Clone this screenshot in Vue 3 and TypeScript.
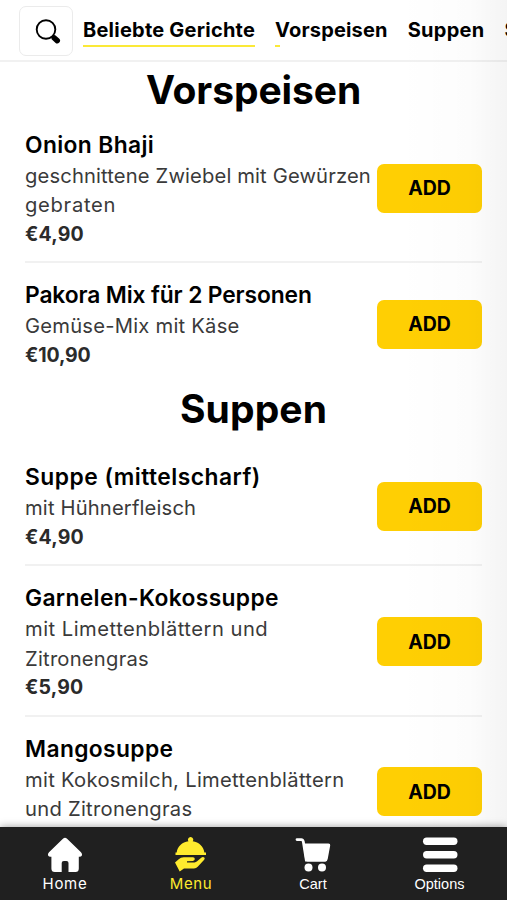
<script setup lang="ts">
interface Line { text: string; track: number }
interface Dish { name: Line; description: Line[]; price: Line }
interface Section { title: Line; dishes: Dish[] }

const line = (text: string, track: number): Line => ({ text, track })
const spacing = (l: Line) => ({ letterSpacing: `${l.track}px` })

const categories: (Line & { progress: string })[] = [
  { text: 'Beliebte Gerichte', track: 0.23, progress: '100%' },
  { text: 'Vorspeisen', track: 0.18, progress: '5px' },
  { text: 'Suppen', track: 0.26, progress: '0' },
  { text: 'Salate', track: 0.2, progress: '0' },
]

const sections: Section[] = [
  {
    title: line('Vorspeisen', -0.09),
    dishes: [
      {
        name: line('Onion Bhaji', 0.38),
        description: [line('geschnittene Zwiebel mit Gewürzen', 0.14), line('gebraten', 0.7)],
        price: line('€4,90', 0.17),
      },
      {
        name: line('Pakora Mix für 2 Personen', -0.12),
        description: [line('Gemüse-Mix mit Käse', 0.23)],
        price: line('€10,90', -0.15),
      },
    ],
  },
  {
    title: line('Suppen', 0.1),
    dishes: [
      {
        name: line('Suppe (mittelscharf)', 0.49),
        description: [line('mit Hühnerfleisch', 0.16)],
        price: line('€4,90', 0.17),
      },
      {
        name: line('Garnelen-Kokossuppe', 0.35),
        description: [line('mit Limettenblättern und', 0.49), line('Zitronengras', 0.23)],
        price: line('€5,90', 0.18),
      },
      {
        name: line('Mangosuppe', 0.38),
        description: [line('mit Kokosmilch, Limettenblättern', 0.29), line('und Zitronengras', 0.27)],
        price: line('€5,90', 0.18),
      },
    ],
  },
]
</script>

<template>
  <div class="screen">
    <header class="topbar">
      <button class="search" aria-label="Suche">
        <svg width="28" height="28" viewBox="0 0 28 28">
          <circle cx="12" cy="11.5" r="9.3" fill="none" stroke="#000" stroke-width="1.9" />
          <path d="M18.3 18 20 19.7" stroke="#000" stroke-width="2" />
          <path d="M20.3 20 23.2 22.6" stroke="#000" stroke-width="5.6" stroke-linecap="round" />
        </svg>
      </button>
      <nav class="categories">
        <a v-for="c in categories" :key="c.text" class="category">
          <span :style="spacing(c)">{{ c.text }}</span>
          <i class="progress" :style="{ width: c.progress }"></i>
        </a>
      </nav>
    </header>

    <main class="content">
      <section v-for="s in sections" :key="s.title.text" class="section">
        <h2 class="heading" :style="spacing(s.title)">{{ s.title.text }}</h2>
        <article v-for="d in s.dishes" :key="d.name.text" class="dish">
          <div class="info">
            <h3 class="name" :style="spacing(d.name)">{{ d.name.text }}</h3>
            <p v-for="l in d.description" :key="l.text" class="desc" :style="spacing(l)">{{ l.text }}</p>
            <p class="price" :style="spacing(d.price)">{{ d.price.text }}</p>
          </div>
          <button class="add">ADD</button>
        </article>
      </section>
    </main>

    <div class="edge-fade"></div>

    <footer class="tabbar">
      <a class="tab">
        <svg width="36" height="36" viewBox="0 0 36 36" fill="currentColor">
          <path d="M16.2 1.5Q18 0 19.8 1.5L34 15.2Q35.6 16.9 34.9 18.5 34.3 19.8 32.4 19.8H31.8V31.5Q31.8 35 28.5 35H21.5V26Q21.5 24 19.5 24H16.8Q14.7 24 14.7 26V35H7.8Q4.4 35 4.4 31.5V19.8H3.6Q1.7 19.8 1.1 18.5.4 16.9 2 15.2Z" />
        </svg>
        <span class="label home">Home</span>
      </a>
      <a class="tab active">
        <svg width="36" height="36" viewBox="0 0 36 36" fill="currentColor">
          <path d="M3.700 15.400C4.500 9.500 9 5.200 15.500 4.300A2.600 2.600 0 1 1 19.700 4.300C26 5.200 30.500 9.500 31.400 15.400H33V18H2.500V15.400Z" />
          <path d="M2 25.500 5.700 22.300Q7.700 20.200 10.800 20.200H20Q21.800 20.200 21.800 22 21.800 23.600 19.900 23.900L14 24.300V25.400H21.500Q23 25.400 24.100 24.300L28.200 20.700Q29.900 19.500 31.300 20.500 32.200 21.500 31.200 22.800L24.700 29.700Q23.200 31.400 21 31.400H11L6.700 34.500Z" />
        </svg>
        <span class="label menu">Menu</span>
      </a>
      <a class="tab">
        <svg width="36" height="36" viewBox="0 0 36 36" fill="currentColor">
          <path d="M2 2.600H6.300Q7.800 2.600 8.300 4.500L11.300 23H30.500" fill="none" stroke="currentColor" stroke-width="2.800" stroke-linecap="round" />
          <path d="M8 6.500H33.500Q35.500 6.500 35.200 8.500L32.700 22Q32.300 24.500 30 24.500H12.500Q10.500 24.500 10.200 22.500Z" />
          <circle cx="13.500" cy="30.500" r="4" />
          <circle cx="27" cy="30.500" r="4" />
        </svg>
        <span class="label plain">Cart</span>
      </a>
      <a class="tab">
        <svg width="36" height="36" viewBox="0 0 36 36" fill="currentColor">
          <rect x="1" y="0.500" width="34.500" height="7.500" rx="3.700" />
          <rect x="1" y="14" width="34.500" height="7.500" rx="3.700" />
          <rect x="1" y="27.500" width="34.500" height="7.500" rx="3.700" />
        </svg>
        <span class="label plain">Options</span>
      </a>
    </footer>
  </div>
</template>

<style>
body {
  margin: 0;
  background: #fff;
}
</style>

<style scoped>
.screen {
  position: relative;
  display: flex;
  flex-direction: column;
  width: 100%;
  height: 900px;
  overflow: hidden;
  font-family: Inter, 'Open Sans', sans-serif;
  color: #000;
}
h2, h3, p {
  margin: 0;
}
.topbar {
  flex: none;
  display: flex;
  align-items: flex-start;
  gap: 10px;
  box-sizing: border-box;
  height: 62px;
  padding: 6px 0 0 19px;
  border-bottom: 2px solid #f1f1f1;
}
.search {
  flex: none;
  display: grid;
  place-items: center;
  box-sizing: border-box;
  width: 54px;
  height: 50px;
  padding: 2px 0 0 4px;
  border: 1.5px solid #ebebeb;
  border-radius: 7px;
  background: #fff;
}
.categories {
  flex: 1;
  display: flex;
  gap: 20px;
  min-width: 0;
  overflow: hidden;
}
.category {
  flex: none;
  display: flex;
  flex-direction: column;
  padding-top: 9px;
  font-size: 20px;
  font-weight: 700;
  line-height: 30px;
  white-space: nowrap;
}
.progress {
  height: 2px;
  background: #fbe938;
}
.content {
  flex: 1;
  min-height: 0;
  overflow: hidden;
  padding: 0 25px;
}
.heading {
  height: 51px;
  font-size: 39px;
  font-weight: 700;
  line-height: 56px;
  text-align: center;
}
.section + .section .heading {
  height: 63px;
  line-height: 54px;
}
.dish {
  display: flex;
  align-items: center;
  justify-content: space-between;
  padding: 15px 0 12.5px;
}
.dish:not(:last-child) {
  border-bottom: 2px solid #f1f1f1;
}
.name {
  font-size: 22.8px;
  font-weight: 600;
  line-height: 33px;
  white-space: nowrap;
}
.desc, .price {
  font-size: 19.5px;
  line-height: 29.25px;
  color: #3a3a3a;
  white-space: nowrap;
}
.desc {
  font-size: 20.2px;
}
.price {
  font-weight: 700;
  color: #2b2b2b;
}
.info {
  width: 346px;
}
.add {
  flex: none;
  width: 105px;
  height: 49px;
  padding: 0;
  border: 0;
  border-radius: 7px;
  background: #ffcf03;
  color: #000;
  font: 700 19.5px Inter, sans-serif;
}
.edge-fade {
  position: absolute;
  inset: 0 0 73px auto;
  width: 110px;
  background: linear-gradient(to right, rgba(0, 0, 0, 0), rgba(0, 0, 0, 0.012) 65%, rgba(0, 0, 0, 0.045));
  pointer-events: none;
}
.tabbar {
  flex: none;
  position: relative;
  display: grid;
  grid-template-columns: 126px 126px 118px 135px;
  box-sizing: border-box;
  height: 73px;
  padding: 10px 0 0 2px;
  background: #202020;
  box-shadow: 0 0 8px rgba(0, 0, 0, 0.4);
  color: #fff;
}
.tab {
  display: flex;
  flex-direction: column;
  align-items: center;
}
.active {
  color: #ffeb2e;
}
.label {
  font-size: 15px;
  font-weight: 400;
  line-height: 22px;
}
.home {
  letter-spacing: 0.7px;
}
.menu {
  letter-spacing: 0.6px;
}
.plain {
  font-size: 14.5px;
  font-family: 'Liberation Sans', Arial, sans-serif;
}
</style>
